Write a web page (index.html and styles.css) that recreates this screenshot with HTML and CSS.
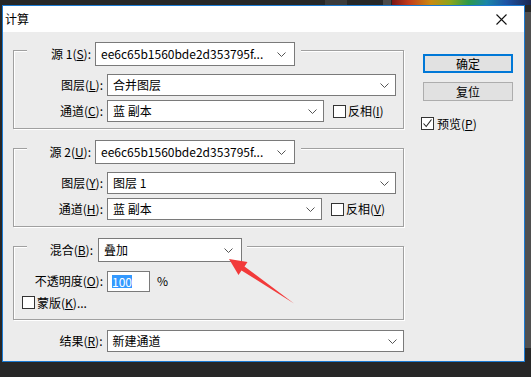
FILE: index.html
```html
<!DOCTYPE html>
<html lang="zh">
<head>
  <meta charset="UTF-8">
  <title>计算</title>
  <link rel="stylesheet" href="styles.css">
</head>
<body>
<div class="window">
  <div class="titlebar">
    <span class="title">计算</span>
    <svg class="close" width="11" height="11" viewBox="0 0 11 11">
      <path d="M0.5 0.5 L10.5 10.5 M10.5 0.5 L0.5 10.5" stroke="#111" stroke-width="1.1" fill="none"/>
    </svg>
  </div>
  <div class="content">
    <div class="main">
      <div class="group">
        <div class="group-head">
          <span class="head-label">源 1(<u>S</u>):</span>
          <div class="select tall w-src">
            <span>ee6c65b1560bde2d353795f...</span>
            <svg class="chev" width="9" height="5" viewBox="0 0 9 5"><path d="M0.5 0.5 L4.5 4.5 L8.5 0.5" stroke="#555" fill="none"/></svg>
          </div>
        </div>
        <div class="row">
          <span class="row-label">图层(<u>L</u>):</span>
          <div class="select w-layer">
            <span>合并图层</span>
            <svg class="chev" width="9" height="5" viewBox="0 0 9 5"><path d="M0.5 0.5 L4.5 4.5 L8.5 0.5" stroke="#555" fill="none"/></svg>
          </div>
        </div>
        <div class="row">
          <span class="row-label">通道(<u>C</u>):</span>
          <div class="select w-chan1">
            <span>蓝 副本</span>
            <svg class="chev" width="9" height="5" viewBox="0 0 9 5"><path d="M0.5 0.5 L4.5 4.5 L8.5 0.5" stroke="#555" fill="none"/></svg>
          </div>
          <span class="check invert"><span class="box"></span>反相(<u>I</u>)</span>
        </div>
      </div>

      <div class="group">
        <div class="group-head">
          <span class="head-label">源 2(<u>U</u>):</span>
          <div class="select tall w-src">
            <span>ee6c65b1560bde2d353795f...</span>
            <svg class="chev" width="9" height="5" viewBox="0 0 9 5"><path d="M0.5 0.5 L4.5 4.5 L8.5 0.5" stroke="#555" fill="none"/></svg>
          </div>
        </div>
        <div class="row">
          <span class="row-label">图层(<u>Y</u>):</span>
          <div class="select w-layer">
            <span>图层 1</span>
            <svg class="chev" width="9" height="5" viewBox="0 0 9 5"><path d="M0.5 0.5 L4.5 4.5 L8.5 0.5" stroke="#555" fill="none"/></svg>
          </div>
        </div>
        <div class="row">
          <span class="row-label">通道(<u>H</u>):</span>
          <div class="select w-chan2">
            <span>蓝 副本</span>
            <svg class="chev" width="9" height="5" viewBox="0 0 9 5"><path d="M0.5 0.5 L4.5 4.5 L8.5 0.5" stroke="#555" fill="none"/></svg>
          </div>
          <span class="check invert"><span class="box"></span>反相(<u>V</u>)</span>
        </div>
      </div>

      <div class="group blend">
        <div class="group-head">
          <span class="head-label">混合(<u>B</u>):</span>
          <div class="select tall w-blend">
            <span>叠加</span>
            <svg class="chev" width="9" height="5" viewBox="0 0 9 5"><path d="M0.5 0.5 L4.5 4.5 L8.5 0.5" stroke="#555" fill="none"/></svg>
          </div>
        </div>
        <div class="row">
          <span class="row-label">不透明度(<u>O</u>):</span>
          <div class="input"><span class="sel-text">100</span></div>
          <span class="pct">%</span>
        </div>
        <div class="row mask">
          <span class="check"><span class="box"></span>蒙版(<u>K</u>)...</span>
        </div>
      </div>

      <div class="row result">
        <span class="row-label">结果(<u>R</u>):</span>
        <div class="select w-result">
          <span>新建通道</span>
          <svg class="chev" width="9" height="5" viewBox="0 0 9 5"><path d="M0.5 0.5 L4.5 4.5 L8.5 0.5" stroke="#555" fill="none"/></svg>
        </div>
      </div>
    </div>

    <div class="side">
      <div class="btn default">确定</div>
      <div class="btn">复位</div>
      <span class="check preview">
        <span class="box">
          <svg width="11" height="11" viewBox="0 0 11 11"><path d="M1.5 5.5 L4.2 8.5 L9.5 1.5" stroke="#222" stroke-width="1.1" fill="none"/></svg>
        </span>预览(<u>P</u>)
      </span>
    </div>
  </div>
</div>

<svg class="arrow" width="531" height="377" viewBox="0 0 531 377">
  <polygon points="229,259 247.5,262 244.5,266.5 294,303.5 241.5,270.5 238.5,275" fill="#f23a3a"/>
</svg>
</body>
</html>
```

FILE: styles.css
```css
* {
  box-sizing: border-box;
}

body {
  margin: 0;
  width: 531px;
  height: 377px;
  overflow: hidden;
  position: relative;
  font: 12px/16px "Noto Sans CJK SC", "Noto Sans", sans-serif;
  color: #000;
  background:
    linear-gradient(90deg, #7a1414, #c23a1c 12%, #c98a12 28%, #8aa51c 42%, #2c9a4a 55%, #1a86a8 68%, #1d54a6 82%, #1c2750 100%) 392px 0 / 139px 5px no-repeat,
    linear-gradient(#3b3b3b, #3b3b3b) 325px 0 / 22px 5px no-repeat,
    linear-gradient(#4a4a4a, #4a4a4a) 383px 0 / 8px 5px no-repeat,
    linear-gradient(#4f4f4f, #4f4f4f) 525px 12px / 6px 336px no-repeat,
    #272727;
}

u {
  text-decoration: underline;
  text-underline-offset: 1px;
}

.window {
  margin: 5px 0 0 2px;
  width: 523px;
  height: 357px;
  border: 1px solid #1b7ad2;
  background: #ececec;
  display: flex;
  flex-direction: column;
}

.titlebar {
  height: 26px;
  background: #fff;
  display: flex;
  align-items: center;
  justify-content: space-between;
  padding: 0 17px 0 2px;
}

.title {
  font-size: 12px;
}

.content {
  display: flex;
  padding-left: 10px;
}

.main {
  width: 391px;
}

.group {
  margin-top: 19px;
  border: 1px solid #a0a0a0;
  box-shadow: 1px 1px 0 #fff, inset 1px 1px 0 #fff;
  padding-bottom: 6px;
}

.group:first-child {
  margin-top: 18px;
}

.group-head {
  display: flex;
  align-items: center;
  width: fit-content;
  height: 24px;
  margin: -9px 0 0 13px;
  padding-right: 6px;
  background: #ececec;
}

.head-label {
  width: 64px;
  margin-right: 4px;
  text-align: right;
  white-space: nowrap;
}

.blend {
  padding-bottom: 10px;
}

.blend .group-head {
  padding-right: 5px;
}

.blend .head-label {
  width: 66px;
  margin-right: 5px;
}

.row {
  display: flex;
  align-items: center;
  height: 22px;
  margin-top: 4px;
}

.group-head + .row {
  margin-top: 8px;
}

.row-label {
  width: 89px;
  margin-right: 4px;
  text-align: right;
  white-space: nowrap;
}

.select {
  display: flex;
  align-items: center;
  justify-content: space-between;
  height: 22px;
  border: 1px solid #7a7a7a;
  background: #fff;
  padding: 0 6px 0 5px;
  white-space: nowrap;
}

.select.tall {
  height: 24px;
  padding-right: 8px;
}

.w-src { width: 200px; }
.w-layer { width: 289px; }
.w-chan1 { width: 217px; }
.w-chan2 { width: 215px; }
.w-blend { width: 144px; }
.w-result { width: 299px; }

.chev {
  display: block;
}

.check {
  display: flex;
  align-items: center;
  white-space: nowrap;
}

.box {
  display: flex;
  align-items: center;
  justify-content: center;
  width: 13px;
  height: 13px;
  border: 1px solid #333;
  background: #fff;
  margin-right: 2px;
}

.invert {
  margin-left: 9px;
}

.input {
  display: flex;
  align-items: center;
  width: 43px;
  height: 21px;
  padding-left: 4px;
  border: 1px solid #7a7a7a;
  background: #fff;
}

.sel-text {
  display: inline-block;
  line-height: 13px;
  background: #3399ff;
  color: #fff;
}

.pct {
  margin-left: 7px;
}

.row.mask {
  height: 13px;
  padding-left: 8px;
}

.row.result {
  margin-top: 10px;
}

.row.result .row-label {
  width: 90px;
}

.side {
  margin-left: 17px;
  padding-top: 22px;
}

.btn {
  width: 90px;
  height: 19px;
  margin-left: 2px;
  border: 1px solid #adadad;
  background: #e1e1e1;
  text-align: center;
  line-height: 17px;
}

.btn + .btn {
  margin-top: 9px;
}

.btn.default {
  border: 2px solid #0078d7;
  line-height: 15px;
}

.preview {
  margin-top: 16px;
  height: 13px;
}

.preview .box {
  margin-right: 3px;
}

.arrow {
  position: absolute;
  top: 0;
  left: 0;
  pointer-events: none;
}
```
